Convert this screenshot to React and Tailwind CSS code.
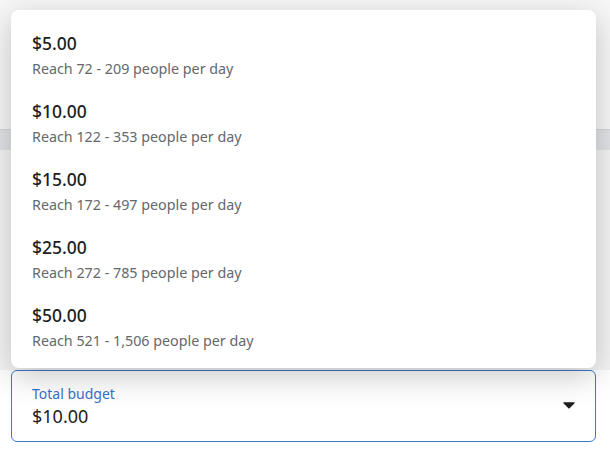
import React from "react";

const options = [
  { price: "$5.00", reach: "Reach 72 - 209 people per day" },
  { price: "$10.00", reach: "Reach 122 - 353 people per day" },
  { price: "$15.00", reach: "Reach 172 - 497 people per day" },
  { price: "$25.00", reach: "Reach 272 - 785 people per day" },
  { price: "$50.00", reach: "Reach 521 - 1,506 people per day" },
];

const App = () => {
  return (
    <div
      className="relative w-[610px] h-[450px] overflow-hidden bg-white"
      style={{ fontFamily: '"Noto Sans", "Open Sans", Arial, sans-serif' }}
    >
      {/* page behind the menu */}
      <div className="h-[130px] bg-[#f7f7f7] border-b border-[#d4d6da]" />
      <div className="h-[20px] bg-[#e2e3e6]" />
      <div className="h-[220px] bg-[#f4f4f5]" />

      {/* select field */}
      <div className="ml-[11px] w-[585px] h-[72px] rounded-md border border-[#3f78c9] bg-white flex items-center justify-between pl-[20px] pr-[20px]">
        <div className="flex flex-col">
          <span className="text-[14px] leading-[20px] text-[#3a70c9]">Total budget</span>
          <span className="text-[18px] leading-[25px] text-[#1c1e21]">$10.00</span>
        </div>
        <svg width="12" height="8" viewBox="0 0 12 8" className="mb-[2px]">
          <path d="M1 1.2h10c.6 0 .9.6.6 1.1L6.6 7.2c-.3.4-.9.4-1.2 0L.4 2.3C.1 1.8.4 1.2 1 1.2z" fill="#1c1e21" />
        </svg>
      </div>

      {/* dropdown menu */}
      <div className="absolute left-[11px] top-[10px] w-[585px] h-[358px] rounded-lg bg-white shadow-[0_8px_32px_rgba(0,0,0,0.22)] pt-[22px]">
        {options.map((o) => (
          <div key={o.price} className="h-[68px] pl-[21px] flex flex-col">
            <span className="text-[17.5px] leading-[22px] font-medium text-[#1c1e21]">{o.price}</span>
            <span className="mt-[5px] text-[14.3px] leading-[20px] text-[#65676b]">{o.reach}</span>
          </div>
        ))}
      </div>
    </div>
  );
};

export default App;
